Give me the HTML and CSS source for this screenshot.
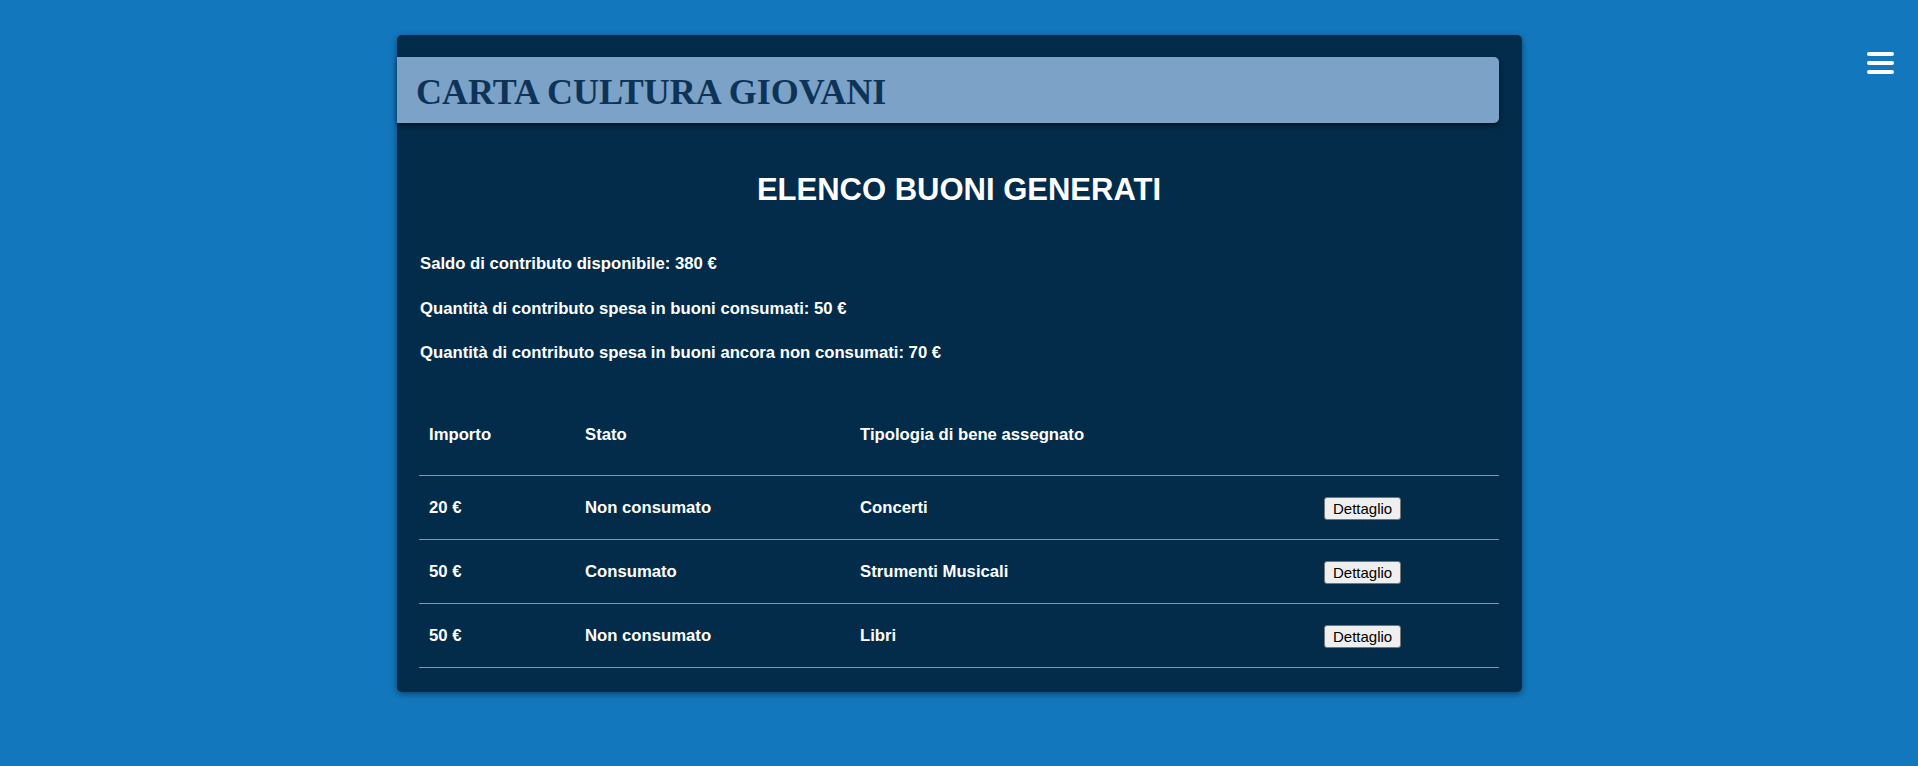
FILE: index.html
```html
<!DOCTYPE html>
<html lang="it">
<head>
<meta charset="utf-8">
<title>Carta Cultura Giovani</title>
<link rel="stylesheet" href="styles.css">
</head>
<body>
<button class="menu-btn" aria-label="Menu">
  <span></span><span></span><span></span>
</button>
<main class="card">
  <header class="card-header">
    <h1 class="brand">CARTA CULTURA GIOVANI</h1>
  </header>
  <h2 class="page-title">ELENCO BUONI GENERATI</h2>
  <p class="info">Saldo di contributo disponibile: 380 €</p>
  <p class="info">Quantità di contributo spesa in buoni consumati: 50 €</p>
  <p class="info">Quantità di contributo spesa in buoni ancora non consumati: 70 €</p>
  <table class="vouchers">
    <colgroup>
      <col class="c-imp"><col class="c-stato"><col class="c-tipo"><col>
    </colgroup>
    <thead>
      <tr><th>Importo</th><th>Stato</th><th>Tipologia di bene assegnato</th><th></th></tr>
    </thead>
    <tbody>
      <tr><td>20 €</td><td>Non consumato</td><td>Concerti</td><td><button class="detail-btn">Dettaglio</button></td></tr>
      <tr><td>50 €</td><td>Consumato</td><td>Strumenti Musicali</td><td><button class="detail-btn">Dettaglio</button></td></tr>
      <tr><td>50 €</td><td>Non consumato</td><td>Libri</td><td><button class="detail-btn">Dettaglio</button></td></tr>
    </tbody>
  </table>
</main>
</body>
</html>
```
FILE: styles.css
```css
* { box-sizing: border-box; }

html, body {
  margin: 0;
  padding: 0;
}

body {
  background: #1377bd;
  font-family: "Liberation Sans", Arial, sans-serif;
  color: #ffffff;
  min-height: 766px;
  padding-top: 35px;
}

.menu-btn {
  position: absolute;
  top: 50px;
  right: 24px;
  width: 27px;
  height: 26px;
  border: 0;
  background: transparent;
  display: flex;
  flex-direction: column;
  justify-content: space-between;
  padding: 2px 0;
  cursor: pointer;
}

.menu-btn span {
  display: block;
  height: 4px;
  background: #ffffff;
  border-radius: 2px;
}

.card {
  width: 1125px;
  margin: 0 0 0 397px;
  background: #032c4a;
  border-radius: 5px;
  box-shadow: 0 2px 6px rgba(0, 0, 0, 0.45);
  padding: 22px 23px 24px 22px;
}

.card-header {
  margin-left: -22px;
  height: 66px;
  background: #7ca2c7;
  border-radius: 0 5px 5px 0;
  box-shadow: 0 3px 5px rgba(0, 0, 0, 0.45);
  display: flex;
  align-items: center;
  padding-left: 19px;
}

.brand {
  margin: 0;
  font-family: "Liberation Serif", "Times New Roman", serif;
  font-weight: bold;
  font-size: 36px;
  line-height: 40px;
  color: #0d3457;
  padding-top: 3px;
}

.page-title {
  margin: 49px 0 46px;
  text-align: center;
  font-size: 31px;
  line-height: 36px;
  font-weight: bold;
}

.info {
  margin: 0 0 24.5px;
  font-size: 16.7px;
  line-height: 20px;
  font-weight: bold;
  padding-left: 1px;
}

.vouchers {
  width: 100%;
  border-collapse: collapse;
  table-layout: fixed;
  margin-top: 31px;
  font-size: 16.7px;
  font-weight: bold;
}

.c-imp { width: 156px; }
.c-stato { width: 275px; }
.c-tipo { width: 464px; }

.vouchers th,
.vouchers td {
  text-align: left;
  line-height: 20px;
  border-bottom: 1px solid #8a949c;
  vertical-align: middle;
}

.vouchers th {
  padding: 31px 10px 30px;
}

.vouchers tbody tr {
  height: 64px;
}

.vouchers td {
  padding: 0 10px;
}

.detail-btn {
  display: inline-block;
  vertical-align: middle;
  font-family: "Liberation Sans", Arial, sans-serif;
  font-size: 15px;
  line-height: 17px;
  font-weight: normal;
  color: #000000;
  background: #efefef;
  border: 1px solid #767676;
  border-radius: 3px;
  padding: 2px 8px;
  margin-top: 2px;
}
```
